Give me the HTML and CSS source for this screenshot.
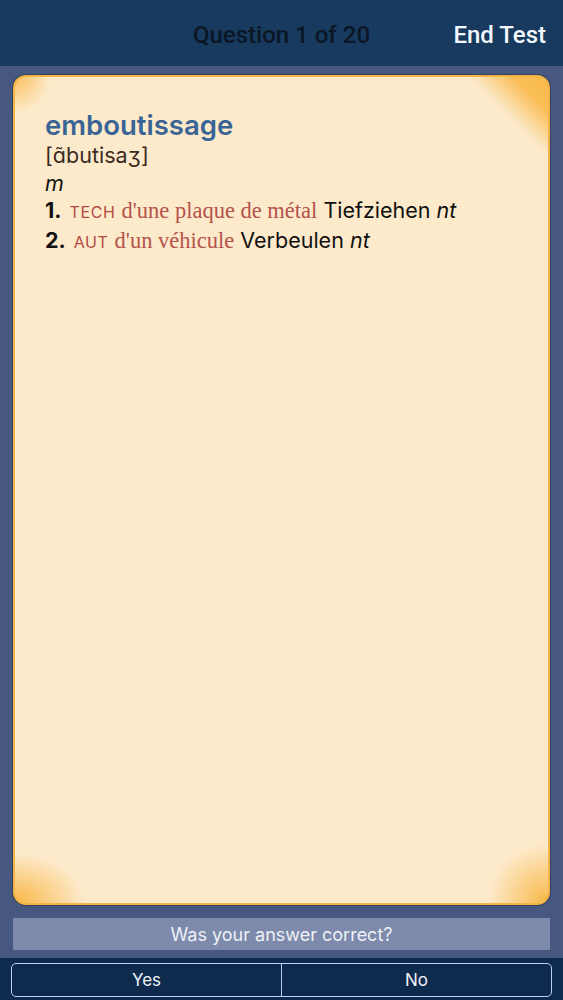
FILE: index.html
```html
<!DOCTYPE html>
<html>
<head>
<meta charset="utf-8">
<link rel="stylesheet" href="styles.css">
</head>
<body>
<div class="screen">
  <header class="topbar">
    <div class="title">Question 1 of 20</div>
    <div class="end">End Test</div>
  </header>
  <main class="stage">
    <section class="card">
      <div class="entry">
        <div class="head">emboutissage</div>
        <div class="pron">[ɑ̃butisaʒ]</div>
        <div class="gram">m</div>
        <div class="sense"><b class="num">1.</b> <span class="dom">TECH</span> <span class="ctx">d'une plaque de métal</span> Tiefziehen <i>nt</i></div>
        <div class="sense"><b class="num">2.</b> <span class="dom">AUT</span> <span class="ctx">d'un véhicule</span> Verbeulen <i>nt</i></div>
      </div>
    </section>
    <div class="ask">Was your answer correct?</div>
  </main>
  <footer class="foot">
    <div class="choice">
      <div class="btn">Yes</div>
      <div class="btn">No</div>
    </div>
  </footer>
</div>
</body>
</html>
```

FILE: styles.css
```css
* { box-sizing: border-box; }
html, body { margin: 0; padding: 0; }
body {
  width: 563px;
  height: 1000px;
  overflow: hidden;
  background: #465880;
  font-family: Inter, "Liberation Sans", Arial, sans-serif;
}
.screen {
  display: flex;
  flex-direction: column;
  height: 1000px;
}
.topbar {
  height: 66px;
  background: #173a5e;
  display: flex;
  align-items: center;
  justify-content: center;
  position: relative;
  font-family: Roboto, "Liberation Sans", sans-serif;
  font-weight: 500;
  padding-top: 3px;
}
.title {
  color: #0b1626;
  font-size: 24px;
}
.end {
  position: absolute;
  right: 17px;
  top: 21px;
  color: #f4f8fc;
  font-size: 24px;
}
.stage {
  flex: 1;
  display: flex;
  flex-direction: column;
  padding: 9px 13px 8px 13px;
  background: #465880;
}
.card {
  height: 830px;
  border: 2px solid #f2b445;
  border-radius: 13px;
  box-shadow: 0 0 0 1px rgba(20, 30, 50, 0.35);
  background:
    radial-gradient(circle at 0 0, rgba(248, 180, 64, 0.8) 0, rgba(248, 180, 64, 0) 36px),
    linear-gradient(225deg, rgba(248, 182, 66, 0.95) 0, rgba(248, 182, 66, 0.85) 24px, rgba(253, 234, 203, 0) 56px),
    radial-gradient(ellipse 70px 50px at 0 100%, rgba(248, 180, 64, 0.95) 0, rgba(248, 180, 64, 0) 100%),
    radial-gradient(ellipse 60px 60px at 100% 100%, rgba(248, 180, 64, 0.95) 0, rgba(248, 180, 64, 0) 100%),
    #fdeacb;
  padding: 33px 20px 0 30px;
}
.entry {
  color: #111;
  font-size: 21.5px;
  line-height: 27.7px;
}
.head {
  color: #3a6496;
  font-weight: 600;
  font-size: 27.5px;
  line-height: 30px;
  margin-bottom: 2px;
}
.pron {
  color: #3a2a22;
}
.gram {
  font-style: italic;
}
.num {
  font-weight: 700;
}
.dom {
  color: #b44a44;
  font-size: 16px;
  letter-spacing: 0.6px;
  margin-left: 2px;
}
.ctx {
  font-family: "Liberation Serif", "Times New Roman", serif;
  color: #b5524c;
  font-size: 22.5px;
}
.ask {
  margin-top: 13px;
  height: 32px;
  background: #7d8aab;
  color: #eef1f7;
  font-family: Inter, "Liberation Sans", sans-serif;
  font-size: 18px;
  display: flex;
  align-items: center;
  justify-content: center;
}
.foot {
  height: 42px;
  background: #0e2a4d;
  padding: 5px 11px 3px 11px;
}
.choice {
  height: 34px;
  border: 1.5px solid #b7d1ee;
  border-radius: 5px;
  display: grid;
  grid-template-columns: 269px 1fr;
}
.btn {
  display: flex;
  align-items: center;
  justify-content: center;
  color: #f0f4fa;
  font-family: Inter, "Liberation Sans", sans-serif;
  font-size: 17px;
}
.btn + .btn {
  border-left: 1.5px solid #b7d1ee;
}
```
